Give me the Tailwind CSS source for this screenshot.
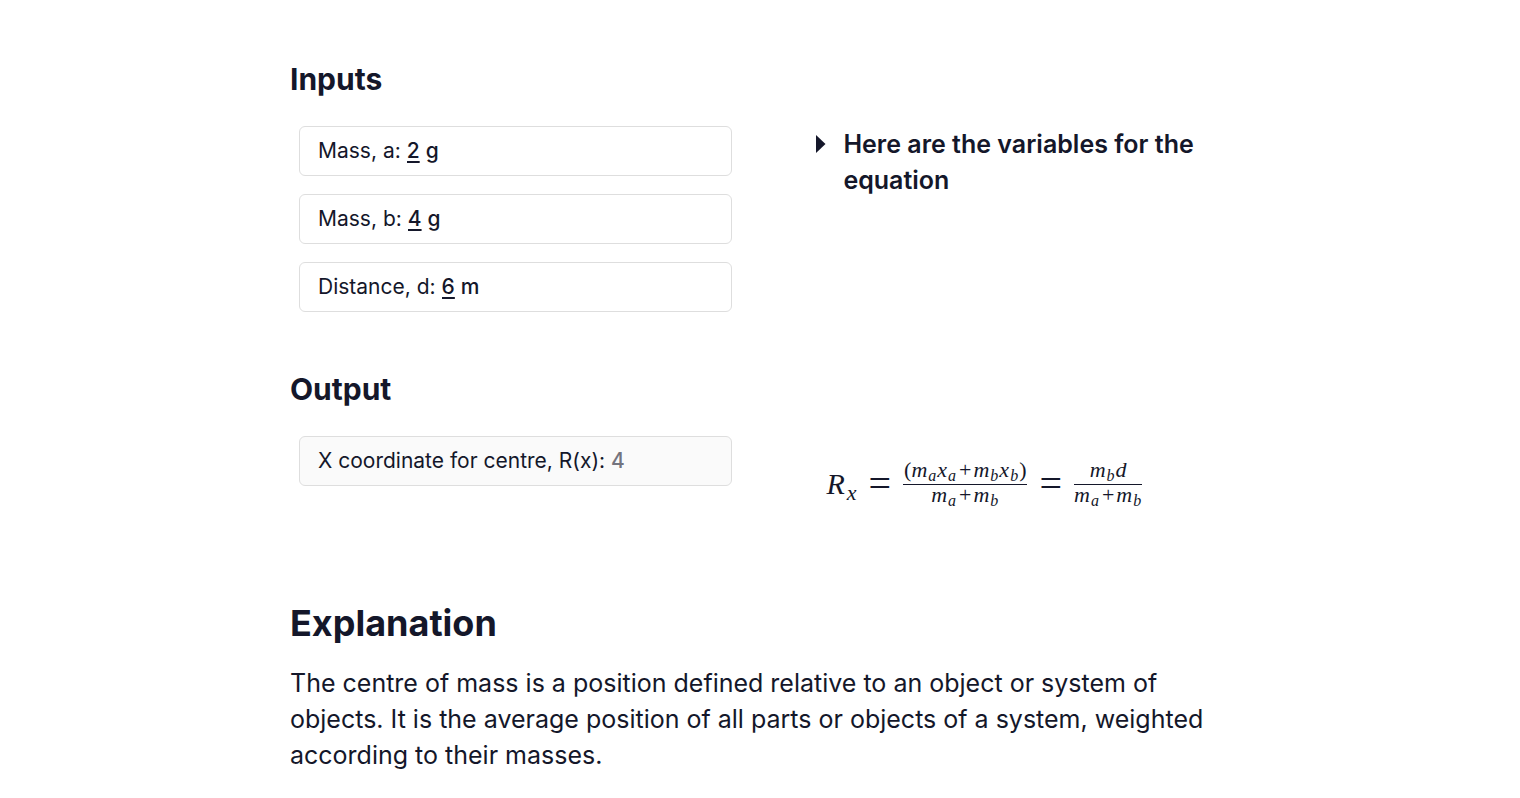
<!DOCTYPE html>
<html lang="en">
<head>
    <meta charset="UTF-8">
    <meta name="viewport" content="width=device-width, initial-scale=1.0">
    <title>Centre of mass calculator</title>
    <script src="https://cdn.jsdelivr.net/npm/@tailwindcss/browser@4"></script>
</head>
<body class="bg-white text-[#14172a] font-['Inter','Noto_Sans',sans-serif]">

    <main class="max-w-[940px] mx-auto pt-[61px] pb-6">

        <!-- Inputs -->
        <section>
            <h2 class="text-3xl leading-9 font-bold mb-[29px]">Inputs</h2>
            <div class="flex justify-between">
                <form class="w-[48%] px-[9px] flex flex-col gap-[18px] text-[21px]">
                    <div class="flex items-center h-[50px] px-[18px] border border-[#dedede] rounded-md">
                        <label for="mass-a">Mass, a:</label>
                        <input id="mass-a" type="text" value="2" class="field-sizing-content ml-[6px] font-medium underline underline-offset-3 decoration-2">
                        <span class="ml-[6px] font-medium">g</span>
                    </div>
                    <div class="flex items-center h-[50px] px-[18px] border border-[#dedede] rounded-md">
                        <label for="mass-b">Mass, b:</label>
                        <input id="mass-b" type="text" value="4" class="field-sizing-content ml-[6px] font-medium underline underline-offset-3 decoration-2">
                        <span class="ml-[6px] font-medium">g</span>
                    </div>
                    <div class="flex items-center h-[50px] px-[18px] border border-[#dedede] rounded-md">
                        <label for="distance">Distance, d:</label>
                        <input id="distance" type="text" value="6" class="field-sizing-content ml-[6px] font-medium underline underline-offset-3 decoration-2">
                        <span class="ml-[6px] font-medium">m</span>
                    </div>
                </form>
                <details class="w-[44%] group">
                    <summary class="flex list-none cursor-pointer text-[25px] leading-9 font-semibold">
                        <svg class="w-[10px] h-[18px] mt-[9px] mr-[17px] shrink-0 group-open:rotate-90" viewBox="0 0 10 18" fill="currentColor" aria-hidden="true"><path d="M0 0L9.5 9L0 18Z"/></svg>
                        <span>Here are the variables for the equation</span>
                    </summary>
                </details>
            </div>
        </section>

        <!-- Output -->
        <section class="mt-[59px]">
            <h2 class="text-3xl leading-9 font-bold mb-[29px]">Output</h2>
            <div class="flex justify-between">
                <div class="w-[48%] px-[9px] text-[21px]">
                    <div class="flex items-center h-[50px] px-[18px] border border-[#dedede] rounded-md bg-[#fafafa]">
                        <span>X coordinate for centre, R(x):</span>
                        <output for="mass-a mass-b distance" class="ml-[6px] font-medium text-[#74747e]">4</output>
                    </div>
                </div>
                <!-- Formula -->
                <div class="w-[44%] h-24 pl-[10px] flex items-center font-['Liberation_Serif',serif] text-3xl">
                    <span class="leading-7"><i>R</i><sub class="ml-[2px] text-[22px] italic">x</sub></span>
                    <span class="mx-3 text-[40px] leading-8">=</span>
                    <span class="flex flex-col items-center text-[22px] leading-5">
                        <span class="border-b border-current px-px">(<i>m</i><sub class="mx-px text-base italic">a</sub><i>x</i><sub class="mx-px text-base italic">a</sub><span class="mx-[2px]">+</span><i>m</i><sub class="mx-px text-base italic">b</sub><i>x</i><sub class="mx-px text-base italic">b</sub>)</span>
                        <span><i>m</i><sub class="mx-px text-base italic">a</sub><span class="mx-[2px]">+</span><i>m</i><sub class="mx-px text-base italic">b</sub></span>
                    </span>
                    <span class="mx-3 text-[40px] leading-8">=</span>
                    <span class="flex flex-col items-center text-[22px] leading-5">
                        <span><i>m</i><sub class="mx-px text-base italic">b</sub><i>d</i></span>
                        <span class="border-t border-current"><i>m</i><sub class="mx-px text-base italic">a</sub><span class="mx-[2px]">+</span><i>m</i><sub class="mx-px text-base italic">b</sub></span>
                    </span>
                </div>
            </div>
        </section>

        <!-- Explanation -->
        <section class="mt-[69px]">
            <h1 class="text-4xl leading-11 font-bold mb-5">Explanation</h1>
            <p class="text-[25px] leading-9">The centre of mass is a position defined relative to an object or system of objects. It is the average position of all parts or objects of a system, weighted according to their masses.</p>
        </section>

    </main>

</body>
</html>
